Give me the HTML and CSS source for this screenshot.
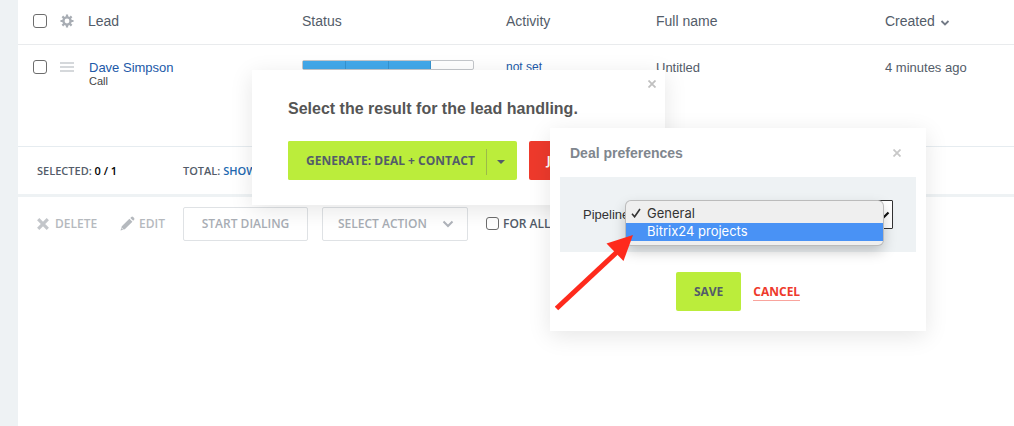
FILE: index.html
```html
<!DOCTYPE html>
<html lang="en">
<head>
    <meta charset="UTF-8">
    <meta name="viewport" content="width=device-width, initial-scale=1.0">
    <title>Leads</title>
    <link rel="stylesheet" href="styles.css">
</head>
<body>

    <main class="content">
        <!-- lead list -->
        <table class="grid">
            <colgroup>
                <col class="col-tools">
                <col class="col-lead">
                <col class="col-status">
                <col class="col-activity">
                <col class="col-name">
                <col>
            </colgroup>
            <thead>
                <tr>
                    <th>
                        <div class="tools">
                            <input type="checkbox" class="check" aria-label="Select all">
                            <svg class="gear" width="14" height="14" viewBox="0 0 14 14" aria-hidden="true">
                                <circle cx="7" cy="7" r="3.6" fill="none" stroke="#a8adb4" stroke-width="2.4"/>
                                <path d="M7 0.5V3M7 11v2.500M0.500 7H3M11 7h2.500M2.400 2.400l1.800 1.800M9.800 9.800l1.800 1.800M2.400 11.600l1.800-1.800M9.800 4.200l1.800-1.800" stroke="#a8adb4" stroke-width="2.200"/>
                            </svg>
                        </div>
                    </th>
                    <th>Lead</th>
                    <th>Status</th>
                    <th>Activity</th>
                    <th>Full name</th>
                    <th>Created
                        <svg class="sort" width="10" height="6" viewBox="0 0 10 6" aria-hidden="true"><path d="M1.500 1l3.500 3.500L8.500 1" fill="none" stroke="#737a86" stroke-width="1.800"/></svg>
                    </th>
                </tr>
            </thead>
            <tbody>
                <tr>
                    <td>
                        <div class="tools">
                            <input type="checkbox" class="check" aria-label="Select Dave Simpson">
                            <svg width="14" height="10" viewBox="0 0 14 10" aria-hidden="true"><path d="M0 1h14M0 5h14M0 9h14" stroke="#c8cbd0" stroke-width="1.600"/></svg>
                        </div>
                    </td>
                    <td class="lead">
                        <a href="#" class="link">Dave Simpson</a>
                        <div class="source">Call</div>
                    </td>
                    <td>
                        <div class="progress"><i class="done"></i><i class="done"></i><i class="done"></i><i></i></div>
                    </td>
                    <td><a href="#" class="link activity">not set</a></td>
                    <td>Untitled</td>
                    <td>4 minutes ago</td>
                </tr>
            </tbody>
        </table>

        <div class="summary">
            <div class="selected">SELECTED: <b>0 / 1</b></div>
            <div>TOTAL: <a href="#">SHOW</a></div>
        </div>

        <!-- group actions -->
        <div class="actions">
            <button class="action delete">
                <svg width="12" height="12" viewBox="0 0 12 12" aria-hidden="true"><path d="M1.200 1.200l9.600 9.600M10.800 1.200l-9.600 9.600" stroke="#c3c6ca" stroke-width="3.200"/></svg>
                DELETE
            </button>
            <button class="action edit">
                <svg width="15" height="15" viewBox="0 0 15 15" aria-hidden="true"><path d="M0.500 14.500l1.300-4.300 7.600-7.400 3 3-7.600 7.400zM10.300 1.900l1-1q0.900-0.700 1.800 0.100l1 1.100q0.800 0.900 0 1.700l-0.900 1z" fill="#b5b9be"/><path d="M1.400 11.700l2 2" stroke="#fff" stroke-width="0.800"/></svg>
                EDIT
            </button>
            <button class="action box dial">START DIALING</button>
            <button class="action box choose">
                SELECT ACTION
                <svg width="12" height="8" viewBox="0 0 12 8" aria-hidden="true"><path d="M1.500 1.500L6 6l4.500-4.500" fill="none" stroke="#b0b4bb" stroke-width="2"/></svg>
            </button>
            <label class="for-all"><input type="checkbox" class="check small">FOR ALL</label>
        </div>
    </main>

    <!-- lead result popup -->
    <div class="popup result">
        <button class="close" aria-label="Close">
            <svg width="8" height="8" viewBox="0 0 8 8"><path d="M0.500 0.500l7 7M7.500 0.500l-7 7" stroke="#c0c0c0" stroke-width="1.800"/></svg>
        </button>
        <h2>Select the result for the lead handling.</h2>
        <div class="result-buttons">
            <div class="split">
                <button class="btn green">GENERATE: DEAL + CONTACT</button>
                <button class="btn green more" aria-label="More">
                    <svg width="8" height="4" viewBox="0 0 8 4"><path d="M0 0h8L4 4z" fill="#535c69"/></svg>
                </button>
            </div>
            <button class="btn red">J</button>
        </div>
    </div>

    <!-- deal preferences popup -->
    <div class="popup deal">
        <div class="deal-head">
            <h3>Deal preferences</h3>
            <button class="close" aria-label="Close">
                <svg width="8" height="8" viewBox="0 0 8 8"><path d="M0.500 0.500l7 7M7.500 0.500l-7 7" stroke="#c8c8c8" stroke-width="1.800"/></svg>
            </button>
        </div>
        <div class="deal-body">
            <label for="pipeline">Pipeline</label>
            <div class="select-wrap">
                <select id="pipeline">
                    <option></option>
                    <option>General</option>
                    <option>Bitrix24 projects</option>
                </select>
                <svg class="select-arrow" width="12" height="8" viewBox="0 0 12 8" aria-hidden="true"><path d="M1.500 1.500L6 6l4.500-4.500" fill="none" stroke="#111" stroke-width="2.200"/></svg>
                <ul class="menu">
                    <li>
                        <svg class="tick" width="10" height="10" viewBox="0 0 10 10" aria-hidden="true"><path d="M1 5.800l2.600 3L9 1" fill="none" stroke="#333" stroke-width="1.600"/></svg>
                        General
                    </li>
                    <li class="active">Bitrix24 projects</li>
                </ul>
            </div>
        </div>
        <div class="deal-buttons">
            <button class="btn green">SAVE</button>
            <a href="#" class="cancel">CANCEL</a>
        </div>
        <svg class="pointer" width="80" height="78" viewBox="0 0 80 78" aria-hidden="true">
            <path d="M1.500 74.500L62 18" stroke="#fe2a1c" stroke-width="5"/>
            <path d="M78 1L51.500 9.500 68.500 27z" fill="#fe2a1c"/>
        </svg>
    </div>

</body>
</html>
```
FILE: styles.css
```css
* {
    box-sizing: border-box;
}

body {
    margin: 0;
    padding-left: 18px;
    background-color: #eef2f4;
    font-family: "Liberation Sans", Arial, sans-serif;
    font-size: 13px;
    color: #535c69;
}

button {
    font-family: "Open Sans", sans-serif;
    padding: 0;
    border: none;
    background: none;
    cursor: pointer;
}

svg {
    display: block;
}

.content {
    min-height: 100vh;
    background-color: #fff;
}

.grid {
    width: 100%;
    table-layout: fixed;
    border-collapse: collapse;
}

.col-tools {
    width: 70px;
}

.col-lead {
    width: 214px;
}

.col-status {
    width: 204px;
}

.col-activity {
    width: 150px;
}

.col-name {
    width: 229px;
}

.grid th {
    height: 44px;
    padding: 0 0 2px;
    border-bottom: 1px solid #e9ebed;
    font-size: 14px;
    font-weight: normal;
    text-align: left;
}

.grid td {
    height: 102px;
    padding: 15px 0 0;
    border-bottom: 1px solid #e6ecf0;
    line-height: 16px;
    vertical-align: top;
}

.grid .lead {
    padding-left: 1px;
}

.tools {
    display: flex;
    align-items: center;
    gap: 13px;
    padding-left: 15px;
}

.check {
    appearance: none;
    width: 14px;
    height: 14px;
    margin: 0;
    border: 1px solid #6d6d6d;
    border-radius: 3px;
    background-color: #fff;
}

.check.small {
    width: 13px;
    height: 13px;
}

.sort {
    display: inline-block;
    margin-left: 1px;
}

.link {
    color: #2159a8;
    text-decoration: none;
}

.activity {
    display: block;
    font-size: 12px;
    line-height: 14px;
}

.source {
    font-size: 11px;
    line-height: 10px;
    color: #444;
}

.progress {
    display: flex;
    width: 172px;
    height: 10px;
    border: 1px solid #c4c7cb;
    border-radius: 2px;
}

.progress i {
    flex: 1;
}

.progress .done {
    background-color: #42a8ea;
    border-right: 1px solid #3593d0;
}

.summary {
    display: flex;
    align-items: center;
    height: 50px;
    padding-left: 19px;
    border-bottom: 3px solid #eef2f4;
    font-family: "Open Sans", sans-serif;
    font-size: 11px;
    font-weight: 600;
}

.selected {
    width: 146px;
}

.summary b {
    color: #000;
    font-weight: 600;
}

.summary a {
    color: #2067b0;
    text-decoration: none;
}

.actions {
    display: flex;
    align-items: center;
    padding: 10px 19px;
}

.action {
    display: flex;
    align-items: center;
    gap: 6px;
    height: 34px;
    font-size: 12px;
    font-weight: 600;
    color: #b5b9be;
}

.delete {
    width: 83px;
}

.edit {
    width: 63px;
    gap: 4px;
}

.box {
    justify-content: center;
    border: 1px solid #dfe2e5;
    border-radius: 2px;
    color: #a8adb4;
}

.dial {
    width: 125px;
    margin-right: 14px;
}

.choose {
    width: 146px;
    justify-content: space-between;
    padding: 0 13px 0 15px;
    margin-right: 18px;
}

.for-all {
    display: flex;
    align-items: center;
    gap: 4px;
    font-family: "Open Sans", sans-serif;
    font-size: 12px;
    font-weight: 600;
}

.popup {
    position: absolute;
    background-color: #fff;
    box-shadow: 0 5px 22px rgba(0, 0, 0, 0.1);
}

.result {
    top: 70px;
    left: 252px;
    width: 413px;
    padding: 28px 36px 25px;
}

.result h2 {
    margin: 0 0 22px;
    font-size: 16px;
    line-height: 21px;
    color: #555;
}

.result .close {
    position: absolute;
    top: 10px;
    right: 9px;
}

.result-buttons {
    display: flex;
    gap: 12px;
}

.btn {
    height: 39px;
    padding: 0 18px;
    border-radius: 2px;
    font-size: 12px;
    font-weight: bold;
    color: #535c69;
}

.green {
    background-color: #bbed3b;
}

.split {
    display: flex;
    flex: none;
    border-radius: 2px;
    background-color: #bbed3b;
}

.split .green {
    padding-right: 11px;
}

.split .more {
    height: 26px;
    margin: 8px 0 5px;
    padding: 0 12px 0 10px;
    border-left: 1px solid #9cba49;
    border-radius: 0;
}

.red {
    flex: 1;
    background-color: #ee3a2c;
    color: #fff;
    text-align: left;
}

.deal {
    top: 128px;
    left: 550px;
    width: 376px;
    padding: 0 10px 20px;
}

.deal-head {
    display: flex;
    align-items: center;
    justify-content: space-between;
    height: 49px;
    padding: 0 15px 0 10px;
}

.deal-head h3 {
    margin: 0;
    font-size: 14px;
    color: #80868e;
}

.deal-body {
    display: flex;
    align-items: center;
    height: 75px;
    padding: 0 23px;
    background-color: #eef2f4;
    color: #333;
}

.deal-body label {
    width: 54px;
}

.select-wrap {
    position: relative;
    flex: 1;
}

.deal-body select {
    display: block;
    appearance: none;
    width: 100%;
    height: 29px;
    border: 1px solid #333;
    border-radius: 1px;
    background-color: #fff;
}

.select-arrow {
    position: absolute;
    top: 11px;
    right: 3px;
}

/* opened list */
.menu {
    position: absolute;
    top: 1px;
    right: 10px;
    left: -11px;
    margin: 0;
    padding: 4px 0;
    list-style: none;
    border-radius: 5px;
    background-color: #efefef;
    box-shadow: 0 0 0 1px #bbb, 0 6px 14px rgba(0, 0, 0, 0.22);
    font-family: Inter, sans-serif;
    font-size: 13px;
}

.menu li {
    display: flex;
    align-items: center;
    height: 18px;
    padding: 0 0 2px 21px;
}

.menu .active {
    background-color: #4992f5;
    color: #fff;
}

.tick {
    margin: 0 6px 0 -16px;
}

.deal-buttons {
    display: flex;
    align-items: center;
    justify-content: center;
    gap: 12px;
    padding-top: 20px;
}

.cancel {
    border-bottom: 1px solid #f9a49d;
    font-family: "Open Sans", sans-serif;
    font-size: 12px;
    font-weight: bold;
    color: #ee3a2c;
    text-decoration: none;
}

.pointer {
    position: absolute;
    top: 106px;
    left: 5px;
}
```
